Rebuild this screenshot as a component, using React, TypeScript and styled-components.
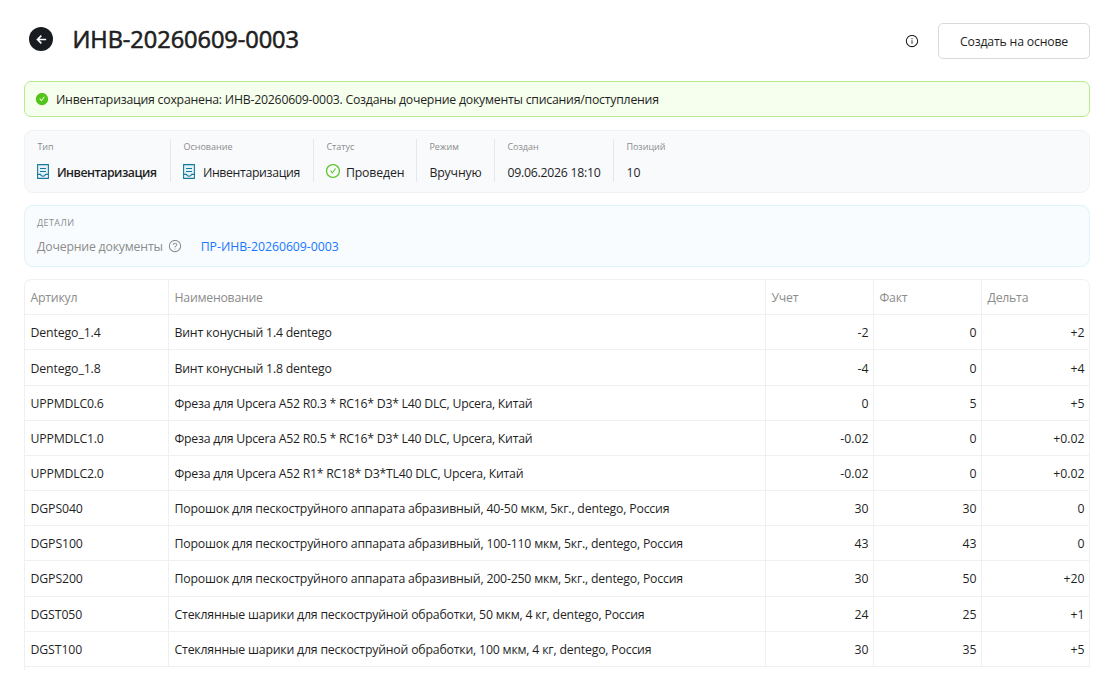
import * as React from 'react';
import styled, { createGlobalStyle } from 'styled-components';
import {
    AiFillCheckCircle,
    AiOutlineCheckCircle,
    AiOutlineInfoCircle,
    AiOutlineQuestionCircle,
} from 'react-icons/ai';

interface IItem {
    sku: string,
    name: string,
    account: string,
    fact: string,
    delta: string,
}

const items: IItem[] = [
    { sku: 'Dentego_1.4', name: 'Винт конусный 1.4 dentego', account: '-2', fact: '0', delta: '+2' },
    { sku: 'Dentego_1.8', name: 'Винт конусный 1.8 dentego', account: '-4', fact: '0', delta: '+4' },
    { sku: 'UPPMDLC0.6', name: 'Фреза для Upcera A52 R0.3 * RC16* D3* L40 DLC, Upcera, Китай', account: '0', fact: '5', delta: '+5' },
    { sku: 'UPPMDLC1.0', name: 'Фреза для Upcera A52 R0.5 * RC16* D3* L40 DLC, Upcera, Китай', account: '-0.02', fact: '0', delta: '+0.02' },
    { sku: 'UPPMDLC2.0', name: 'Фреза для Upcera A52 R1* RC18* D3*TL40 DLC, Upcera, Китай', account: '-0.02', fact: '0', delta: '+0.02' },
    { sku: 'DGPS040', name: 'Порошок для пескоструйного аппарата абразивный, 40-50 мкм, 5кг., dentego, Россия', account: '30', fact: '30', delta: '0' },
    { sku: 'DGPS100', name: 'Порошок для пескоструйного аппарата абразивный, 100-110 мкм, 5кг., dentego, Россия', account: '43', fact: '43', delta: '0' },
    { sku: 'DGPS200', name: 'Порошок для пескоструйного аппарата абразивный, 200-250 мкм, 5кг., dentego, Россия', account: '30', fact: '50', delta: '+20' },
    { sku: 'DGST050', name: 'Стеклянные шарики для пескоструйной обработки, 50 мкм, 4 кг, dentego, Россия', account: '24', fact: '25', delta: '+1' },
    { sku: 'DGST100', name: 'Стеклянные шарики для пескоструйной обработки, 100 мкм, 4 кг, dentego, Россия', account: '30', fact: '35', delta: '+5' },
];

const DocumentIcon: React.FC = () => (
    <svg width="12" height="16" viewBox="0 0 12 16" fill="none" stroke="#147a9c">
        <path stroke="none" fill="#e3f2f7" d="M1 1h10v9H8.500a2.600 2.600 0 0 1-5 0H1z" />
        <path strokeWidth="1.100" d="M.6.600h10.800v13.800H.6z" />
        <path strokeWidth="1.200" d="M1 10.400h2.300a2.900 2.900 0 0 0 5.400 0H11" />
        <path strokeWidth="1" d="M3 4.500h6M3 7.500h6" />
    </svg>
);

const App: React.FC = () => {

    const renderRows = () => {
        return items.map(item => (
            <tr key={item.sku}>
                <Cell $spacing={item.sku.startsWith('UPP') ? -0.2 : -0.12}>{item.sku}</Cell>
                <Cell $spacing={item.name.startsWith('Фреза') ? -0.26 : -0.2}>{item.name}</Cell>
                <Cell $numeric>{item.account}</Cell>
                <Cell $numeric>{item.fact}</Cell>
                <Cell $numeric>{item.delta}</Cell>
            </tr>
        ));
    }

    return (
        <>
            <GlobalStyle />
            <Page>
                <Header>
                    <BackButton aria-label="Назад">
                        <svg width="11" height="11" viewBox="0 0 13 13" fill="none" stroke="#fff" strokeWidth="2">
                            <path d="M12 6.500H2M6.300 2L1.800 6.500l4.500 4.500" />
                        </svg>
                    </BackButton>
                    <Title>ИНВ-20260609-0003</Title>
                    <InfoIcon />
                    <CreateButton>Создать на основе</CreateButton>
                </Header>

                <Alert>
                    <AiFillCheckCircle size={14} color="#52c41a" />
                    <AlertText>
                        Инвентаризация сохранена: ИНВ-20260609-0003. Созданы дочерние документы списания/поступления
                    </AlertText>
                </Alert>

                <Summary>
                    <Field $width={146}>
                        <Label>Тип</Label>
                        <Value $bold><DocumentIcon /><span>Инвентаризация</span></Value>
                    </Field>
                    <Field $width={143}>
                        <Label>Основание</Label>
                        <Value $spacing={-0.35}><DocumentIcon /><span>Инвентаризация</span></Value>
                    </Field>
                    <Field $width={103}>
                        <Label>Статус</Label>
                        <Value $spacing={-0.15}><StatusIcon /><span>Проведен</span></Value>
                    </Field>
                    <Field $width={78}>
                        <Label>Режим</Label>
                        <Value $spacing={-0.15}><span>Вручную</span></Value>
                    </Field>
                    <Field $width={119}>
                        <Label>Создан</Label>
                        <Value $spacing={-0.25}><span>09.06.2026 18:10</span></Value>
                    </Field>
                    <Field $width={80}>
                        <Label>Позиций</Label>
                        <Value><span>10</span></Value>
                    </Field>
                </Summary>

                <Details>
                    <DetailsTitle>ДЕТАЛИ</DetailsTitle>
                    <DetailsRow>
                        <DetailsLabel>Дочерние документы</DetailsLabel>
                        <AiOutlineQuestionCircle size={14} color="#8c8c8c" />
                        <DetailsLink href="#">ПР-ИНВ-20260609-0003</DetailsLink>
                    </DetailsRow>
                </Details>

                <TableFrame>
                    <Table>
                        <colgroup>
                            <col width="144" />
                            <col width="597" />
                            <col width="108" />
                            <col width="108" />
                            <col width="108" />
                        </colgroup>
                        <thead>
                            <tr>
                                <HeadCell>Артикул</HeadCell>
                                <HeadCell>Наименование</HeadCell>
                                <HeadCell>Учет</HeadCell>
                                <HeadCell>Факт</HeadCell>
                                <HeadCell>Дельта</HeadCell>
                            </tr>
                        </thead>
                        <tbody>{renderRows()}</tbody>
                    </Table>
                </TableFrame>
            </Page>
        </>
    )
};

const GlobalStyle = createGlobalStyle`
    * {
        box-sizing: border-box;
    }

    body {
        margin: 0;
        background: #fff;
        color: #1f1f1f;
        font-family: 'Open Sans', 'Noto Sans', sans-serif;
        font-size: 12.3px;
        line-height: 20px;
    }

    svg {
        flex: none;
    }
`;

const Page = styled.div`
    width: 1112px;
    height: 692px;
    padding: 23px 22px 0 24px;
    overflow: hidden;
`;

const Header = styled.header`
    display: flex;
    align-items: center;
    height: 36px;
`;

const BackButton = styled.button`
    display: flex;
    align-items: center;
    justify-content: center;
    width: 24px;
    height: 24px;
    margin: 0 19px 4px 5px;
    padding: 0;
    border: none;
    border-radius: 50%;
    background: #181c20;
    cursor: pointer;
`;

const Title = styled.h1`
    flex: 1;
    margin: 0 0 5px;
    padding-left: 0.5px;
    font-size: 23.6px;
    line-height: 32px;
    font-weight: 400;
    letter-spacing: -0.07px;
    -webkit-text-stroke: 0.6px #1f1f1f;
`;

const InfoIcon = styled(AiOutlineInfoCircle)`
    width: 14px;
    height: 14px;
    margin-right: 19px;
`;

const CreateButton = styled.button`
    width: 152px;
    height: 36px;
    padding: 2px 0 0;
    border: 1px solid #d9d9d9;
    border-radius: 5px;
    background: #fff;
    color: inherit;
    font: inherit;
    letter-spacing: -0.2px;
    cursor: pointer;
`;

const Alert = styled.div`
    display: flex;
    align-items: center;
    gap: 7px;
    height: 36px;
    margin-top: 22px;
    padding: 0 11px 0 10px;
    border: 1px solid #b7eb8f;
    border-radius: 7px;
    background: #f6ffed;
`;

const AlertText = styled.span`
    padding-top: 2px;
    letter-spacing: -0.235px;
`;

const Summary = styled.section`
    display: flex;
    height: 63px;
    margin-top: 13px;
    padding: 8px 0 9px;
    border: 1px solid #f0f2f5;
    border-radius: 9px;
    background: #f8fafc;
`;

const Field = styled.div<{ $width: number }>`
    width: ${({ $width }) => $width}px;
    height: 43px;
    padding-left: 12.4px;
    white-space: nowrap;

    &:not(:last-child) {
        border-right: 1px solid #e5e7ea;
    }
`;

const Label = styled.div`
    color: #8c8c8c;
    font-size: 9px;
    line-height: 15px;
`;

const Value = styled.div<{ $bold?: boolean, $spacing?: number }>`
    display: flex;
    align-items: center;
    gap: 7.5px;
    margin-top: 6px;
    font-weight: ${({ $bold }) => $bold ? 600 : 400};
    letter-spacing: ${({ $bold, $spacing = 0 }) => $bold ? -0.5 : $spacing}px;

    span {
        padding-top: 3px;
    }
`;

const StatusIcon = styled(AiOutlineCheckCircle)`
    width: 16px;
    height: 16px;
    margin: 0 -2.5px 1px -1.5px;
    color: #52c41a;
`;

const Details = styled.section`
    height: 62px;
    margin-top: 12px;
    padding: 9px 12px;
    border: 1px solid #e0f2fe;
    border-radius: 9px;
    background: #f8fcff;
`;

const DetailsTitle = styled.div`
    color: #8c8c8c;
    font-size: 9px;
    line-height: 15px;
    letter-spacing: 0.4px;
`;

const DetailsRow = styled.div`
    display: flex;
    align-items: center;
    margin-top: 7px;

    svg {
        margin-bottom: 2px;
    }
`;

const DetailsLabel = styled.span`
    margin-right: 5px;
    color: #8c8c8c;
    letter-spacing: -0.2px;
`;

const DetailsLink = styled.a`
    margin-left: 19px;
    color: #1677ff;
    letter-spacing: -0.05px;
    text-decoration: none;
`;

const TableFrame = styled.div`
    height: 391px;
    margin-top: 12px;
    border-top: 1px solid #f0f0f0;
    border-left: 1px solid #f0f0f0;
    border-radius: 7px 7px 0 0;
    overflow: hidden;
`;

const Table = styled.table`
    width: 1065px;
    table-layout: fixed;
    border-collapse: separate;
    border-spacing: 0;

    th:last-child {
        border-top-right-radius: 7px;
    }
`;

const HeadCell = styled.th`
    height: 35.28px;
    padding: 2px 5px 0 5.500px;
    border-right: 1px solid #f0f0f0;
    border-bottom: 1px solid #f0f0f0;
    color: #8c8c8c;
    font-weight: 400;
    text-align: left;
    letter-spacing: -0.25px;
`;

const Cell = styled.td<{ $numeric?: boolean, $spacing?: number }>`
    height: 35.160px;
    padding: 2px 4.500px 0 5.500px;
    border-right: 1px solid #f0f0f0;
    border-bottom: 1px solid #f0f0f0;
    text-align: ${({ $numeric }) => $numeric ? 'right' : 'left'};
    letter-spacing: ${({ $spacing = 0 }) => $spacing}px;
    white-space: nowrap;
`;

export default App;
